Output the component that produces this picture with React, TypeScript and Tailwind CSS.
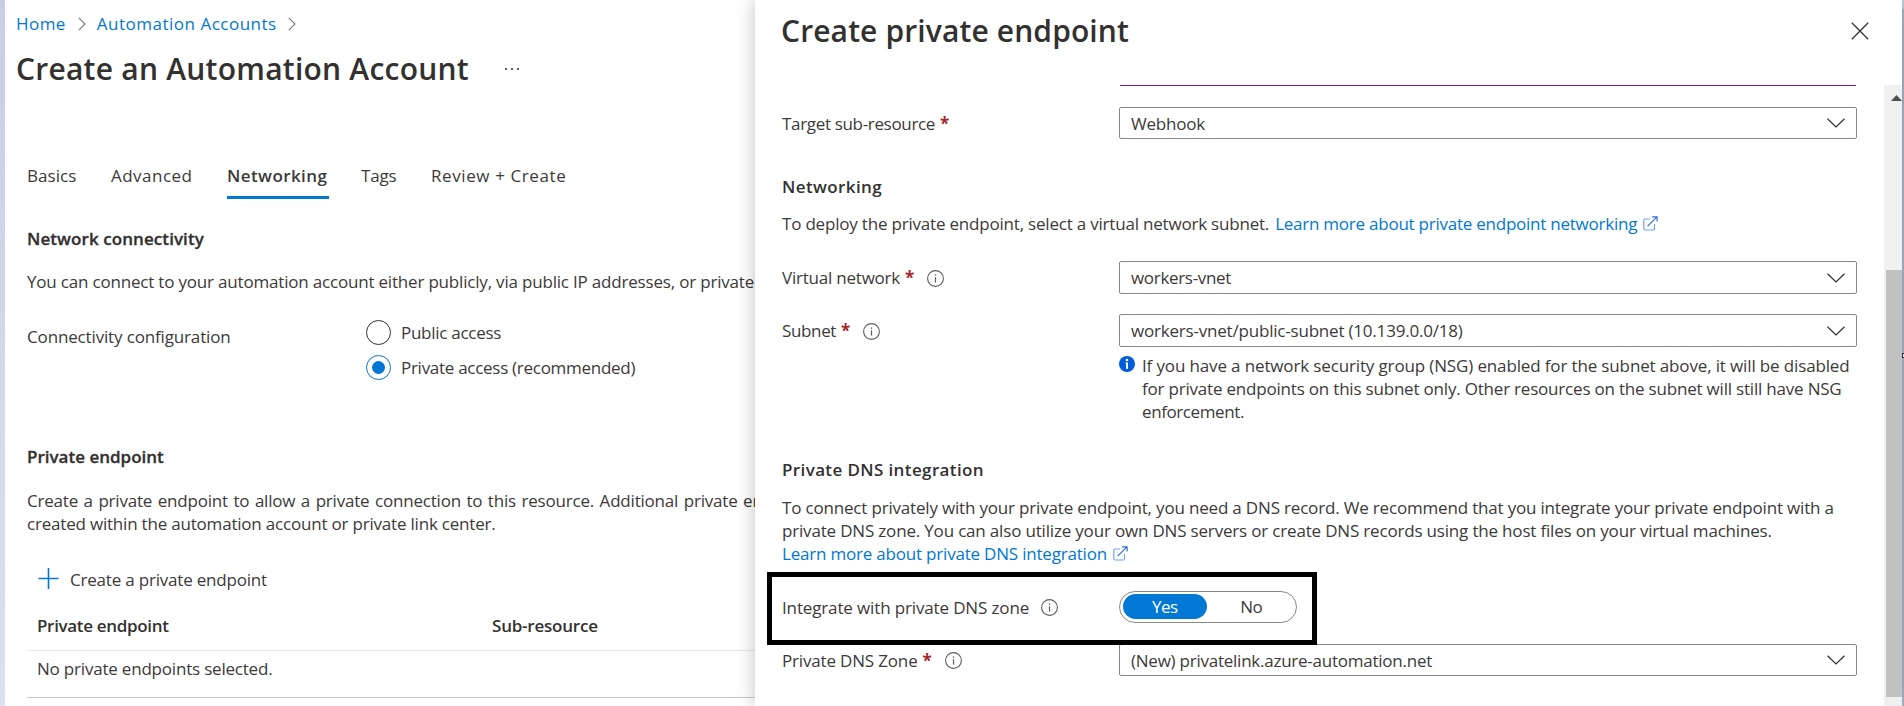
import type { ReactNode } from "react";

function Chevron({ className = "" }: { className?: string }) {
  return (
    <svg className={`h-[14px] w-2 text-[#7a7876] ${className}`} viewBox="0 0 8 14" fill="none" stroke="currentColor" strokeWidth="1.1">
      <path d="M0.8 0.8 7 7 0.8 13.2" />
    </svg>
  );
}

function ChevronDown() {
  return (
    <svg className="h-[10px] w-[18px] text-[#323130]" viewBox="0 0 18 10" fill="none" stroke="currentColor" strokeWidth="1.25">
      <path d="M0.5 0.7 9 9 17.5 0.7" />
    </svg>
  );
}

function InfoOutline({ className = "" }: { className?: string }) {
  return (
    <svg className={`size-[17px] text-[#605e5c] ${className}`} viewBox="0 0 17 17" fill="none" stroke="currentColor">
      <circle cx="8.5" cy="8.5" r="7.9" strokeWidth="1.1" />
      <path d="M8.5 7.2V12.6" strokeWidth="1.2" />
      <path d="M8.5 4.4V5.8" strokeWidth="1.3" />
    </svg>
  );
}

function InfoSolid() {
  return (
    <svg className="mt-[2px] size-4 shrink-0" viewBox="0 0 16 16">
      <circle cx="8" cy="8" r="8" fill="#015cda" />
      <circle cx="8" cy="4" r="1.35" fill="#fff" />
      <path d="M6.4 6.4H9V13H7.1V7.6H6.4Z" fill="#fff" />
    </svg>
  );
}

function ExternalLink({ className = "" }: { className?: string }) {
  return (
    <svg className={`size-[15px] ${className}`} viewBox="0 0 15 15" fill="none" strokeWidth="1.15">
      <path d="M7 3H2A1.2 1.2 0 0 0 0.8 4.2V12.8A1.2 1.2 0 0 0 2 14H10.3A1.2 1.2 0 0 0 11.5 12.8V8" stroke="#6ea0ee" />
      <path d="M4.6 10.2 14 0.9M9.2 0.8H14.1V5.6" stroke="#2b6cd8" />
    </svg>
  );
}

function Select({ className, children }: { className: string; children: ReactNode }) {
  return (
    <div className={`flex w-[738px] items-center justify-between rounded-[2px] border border-[#8a8886] pr-[11px] pl-[11px] ${className}`}>
      <span>{children}</span>
      <ChevronDown />
    </div>
  );
}

function Label({ children, required, info }: { children: ReactNode; required?: boolean; info?: string }) {
  return (
    <div className="flex w-[337px] shrink-0 items-start pt-[5px]">
      {children}
      {required && <span className="ml-[5px] w-[10px] font-bold tracking-normal text-[#a4262c]">*</span>}
      {info && <InfoOutline className={info} />}
    </div>
  );
}

function Radio({ label, checked }: { label: ReactNode; checked?: boolean }) {
  return (
    <div className="flex h-[25px] items-center gap-[10px] leading-[25px]">
      {checked ? (
        <span className="flex size-[25px] items-center justify-center rounded-full border border-[#0078d4]">
          <span className="size-[13px] rounded-full bg-[#0078d4]" />
        </span>
      ) : (
        <span className="size-[25px] rounded-full border border-[#323130]" />
      )}
      {label}
    </div>
  );
}

function AccountForm() {
  return (
    <main className="h-full w-[750px] shrink-0 overflow-hidden pt-3 whitespace-nowrap">
      <nav className="flex items-center pl-[11px] text-[#0078d4]">
        <a className="tracking-[0.45px]">Home</a>
        <Chevron className="ml-3" />
        <a className="ml-[11px] tracking-[0.5px]">Automation Accounts</a>
        <Chevron className="ml-[11px]" />
      </nav>
      <header className="mt-[14px] flex items-center pl-[11px]">
        <h1 className="text-[30px] leading-10 font-semibold tracking-[0.24px] text-[#323130]">Create an Automation Account</h1>
        <span className="ml-9 flex gap-1">
          <i className="size-[2px] bg-[#605e5c]" />
          <i className="size-[2px] bg-[#605e5c]" />
          <i className="size-[2px] bg-[#605e5c]" />
        </span>
      </header>

      <div className="pl-[22px]">
        <div className="mt-[75px] flex h-[35px]">
          <span className="w-[84px] tracking-[0.07px]">Basics</span>
          <span className="w-[116px] tracking-[0.48px]">Advanced</span>
          <span className="w-[102px] border-b-[3px] border-[#0078d4] font-semibold tracking-[0.42px]">Networking</span>
          <span className="ml-8 w-[70px]">Tags</span>
          <span className="tracking-[0.6px]">Review + Create</span>
        </div>

        <h2 className="mt-7 font-semibold tracking-[0.08px] text-[#323130] [-webkit-text-stroke:0.3px]">Network connectivity</h2>
        <p className="mt-5 tracking-[-0.19px]">
          You can connect to your automation account either publicly, via public IP addresses, or privately,
        </p>
        <div className="mt-[27px] flex">
          <span className="w-[339px] pt-[5px] tracking-[-0.15px]">Connectivity configuration</span>
          <div className="flex flex-col gap-[10px] tracking-[-0.28px]">
            <Radio label="Public access" />
            <Radio label="Private access (recommended)" checked />
          </div>
        </div>

        <h2 className="mt-[65px] font-semibold tracking-normal text-[#323130] [-webkit-text-stroke:0.3px]">Private endpoint</h2>
        <p className="mt-[21px]">
          <span className="[word-spacing:1.33px]">
            Create a private endpoint to allow a private connection to this resource. Additional private endpoints
          </span>
          <br />
          created within the automation account or private link center.
        </p>
        <button className="mt-[33px] flex pl-[11px]">
          <svg className="size-[21px] text-[#0078d4]" viewBox="0 0 21 21" fill="none" stroke="currentColor" strokeWidth="1.6">
            <path d="M10.5 0V21M0.5 10.5H20.5" />
          </svg>
          <span className="ml-[11px]">Create a private endpoint</span>
        </button>

        <div className="mt-[23px] flex border-b border-[#eaeaea] pb-[13px] pl-[10px] font-semibold text-[#323130]">
          <span className="w-[455px] tracking-[-0.33px]">Private endpoint</span>
          <span className="tracking-[-0.22px]">Sub-resource</span>
        </div>
        <div className="border-b border-[#c8c8c8] pt-[6px] pb-[17px] pl-[10px]">No private endpoints selected.</div>
      </div>
    </main>
  );
}

function EndpointPanel() {
  return (
    <aside className="z-10 flex h-full w-[1147px] shrink-0 flex-col bg-white whitespace-nowrap shadow-[0_0_18px_rgba(0,0,0,0.25)]">
      <header className="flex h-[85px] shrink-0 items-start justify-between pt-[11px] pr-[33px] pl-[26px]">
        <h1 className="text-[30px] leading-10 font-semibold tracking-[0.12px] text-[#323130]">Create private endpoint</h1>
        <svg className="mt-[11px] size-[18px] text-[#323130]" viewBox="0 0 18 18" fill="none" stroke="currentColor" strokeWidth="1.3">
          <path d="M0.8 0.8 17.2 17.2M17.2 0.8 0.8 17.2" />
        </svg>
      </header>

      <div className="flex min-h-0 flex-1">
        <div className="flex-1 pl-[27px]">
          <div className="ml-[338px] h-px w-[736px] bg-[#881798]" />

          <div className="mt-[21px] flex">
            <Label required>
              <span className="tracking-[-0.33px]">Target sub-resource</span>
            </Label>
            <Select className="h-8">Webhook</Select>
          </div>

          <h2 className="mt-9 font-semibold tracking-[0.39px] text-[#323130]">Networking</h2>
          <p className="mt-[14px] flex">
            <span>To deploy the private endpoint, select a virtual network subnet.</span>
            <a className="ml-[6px] tracking-[-0.24px] text-[#0078d4]">Learn more about private endpoint networking</a>
            <ExternalLink className="mt-1 ml-[6px]" />
          </p>

          <div className="mt-[26px] flex">
            <Label required info="ml-3 mt-1">
              <span className="tracking-[-0.22px]">Virtual network</span>
            </Label>
            <Select className="h-[33px] tracking-[-0.32px]">workers-vnet</Select>
          </div>

          <div className="mt-5 flex">
            <Label required info="ml-3 mt-1">
              <span className="tracking-[-0.36px]">Subnet</span>
            </Label>
            <Select className="h-[33px]">workers-vnet/public-subnet (10.139.0.0/18)</Select>
          </div>
          <div className="mt-[7px] ml-[337px] flex gap-[7px]">
            <InfoSolid />
            <p>
              <span className="tracking-[-0.14px]">If you have a network security group (NSG) enabled for the subnet above, it will be disabled</span>
              <br />
              for private endpoints on this subnet only. Other resources on the subnet will still have NSG
              <br />
              <span className="tracking-[-0.4px]">enforcement.</span>
            </p>
          </div>

          <h2 className="mt-[35px] font-semibold tracking-[0.38px] text-[#323130]">Private DNS integration</h2>
          <p className="mt-[15px] tracking-[-0.18px]">
            To connect privately with your private endpoint, you need a DNS record. We recommend that you integrate your private endpoint with a
            <br />
            private DNS zone. You can also utilize your own DNS servers or create DNS records using the host files on your virtual machines.
          </p>
          <a className="flex text-[#0078d4]">
            Learn more about private DNS integration
            <ExternalLink className="mt-1 ml-[6px]" />
          </a>

          <div className="relative mt-[26px] flex">
            <Label info="ml-[12px] mt-[3px]">
              <span className="tracking-[-0.14px]">Integrate with private DNS zone</span>
            </Label>
            <div className="flex h-8 w-[178px] rounded-full border border-[#8a8886] pt-[2px] pl-[3px] text-center leading-[25px]">
              <span className="h-[25px] w-[84px] rounded-full bg-[#0078d4] tracking-[-0.5px] text-white">Yes</span>
              <span className="w-[90px] tracking-[-0.4px]">No</span>
            </div>
            <div className="absolute -top-[19px] -left-[15px] h-[73px] w-[550px] border-5 border-black" />
          </div>

          <div className="mt-[21px] flex">
            <Label required info="ml-3 mt-[3px]">
              <span className="tracking-[-0.17px]">Private DNS Zone</span>
            </Label>
            <Select className="h-8 tracking-[-0.24px]">(New) privatelink.azure-automation.net</Select>
          </div>
        </div>

        <div className="w-[18px] shrink-0 overflow-hidden bg-[#f0f0f0]">
          <svg className="mt-[10px] ml-[7px] h-[6px] w-[11px]" viewBox="0 0 11 6">
            <path d="M5.5 0 11 6H0Z" fill="#505050" />
          </svg>
          <div className="mt-[169px] ml-[2px] h-[427px] bg-[#c1c1c1]" />
        </div>
      </div>
    </aside>
  );
}

export default function App() {
  return (
    <div className="flex h-[706px] w-[1904px] overflow-hidden bg-white font-['Open_Sans','Segoe_UI',sans-serif] text-[17px] leading-[23px] tracking-[-0.2px] text-[#3b3a39]">
      <div className="h-full w-[5px] shrink-0 bg-linear-to-b from-[#c6d0e3] to-[#dae2f0]" />
      <AccountForm />
      <EndpointPanel />
      <div className="flex h-full w-[2px] shrink-0 flex-col bg-[#adb9cf]">
        <div className="h-[9px] bg-[#c8d2e4]" />
        <div className="mt-[344px] h-[5px] border-y border-l border-[#333] bg-white" />
      </div>
    </div>
  );
}
